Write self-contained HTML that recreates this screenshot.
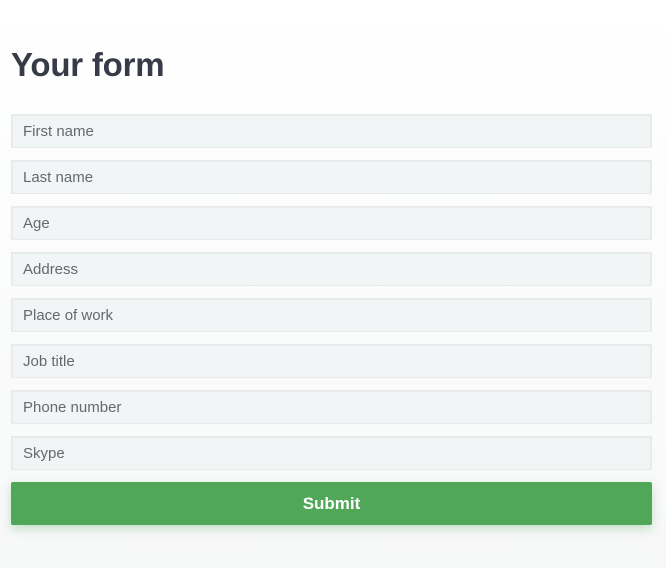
<!DOCTYPE html>
<html><head><style>
html,body{margin:0;padding:0;width:666px;height:568px;overflow:hidden;background:linear-gradient(#fff,#f7f8f8);font-family:"Liberation Sans",sans-serif}
h1{position:absolute;left:11px;top:46px;margin:0;font-size:33px;font-weight:bold;color:#363b47;letter-spacing:-0.2px}
.in{position:absolute;left:11px;width:641px;height:34px;box-sizing:border-box;background:#f2f5f6;border:2px solid #e8ebec;border-bottom-width:1px;color:#636970;font-size:15px;line-height:31px;padding-left:10px}
.btn{position:absolute;left:11px;top:482px;width:641px;height:43px;background:#50a757;border-radius:2px;color:#fff;font-weight:bold;font-size:17px;text-align:center;line-height:44px;box-shadow:0 4px 10px rgba(80,167,87,0.3)}
</style></head><body>
<h1>Your form</h1>
<div class="in" style="top:114px">First name</div>
<div class="in" style="top:160px">Last name</div>
<div class="in" style="top:206px">Age</div>
<div class="in" style="top:252px">Address</div>
<div class="in" style="top:298px">Place of work</div>
<div class="in" style="top:344px">Job title</div>
<div class="in" style="top:390px">Phone number</div>
<div class="in" style="top:436px">Skype</div>
<div class="btn">Submit</div>
</body></html>
